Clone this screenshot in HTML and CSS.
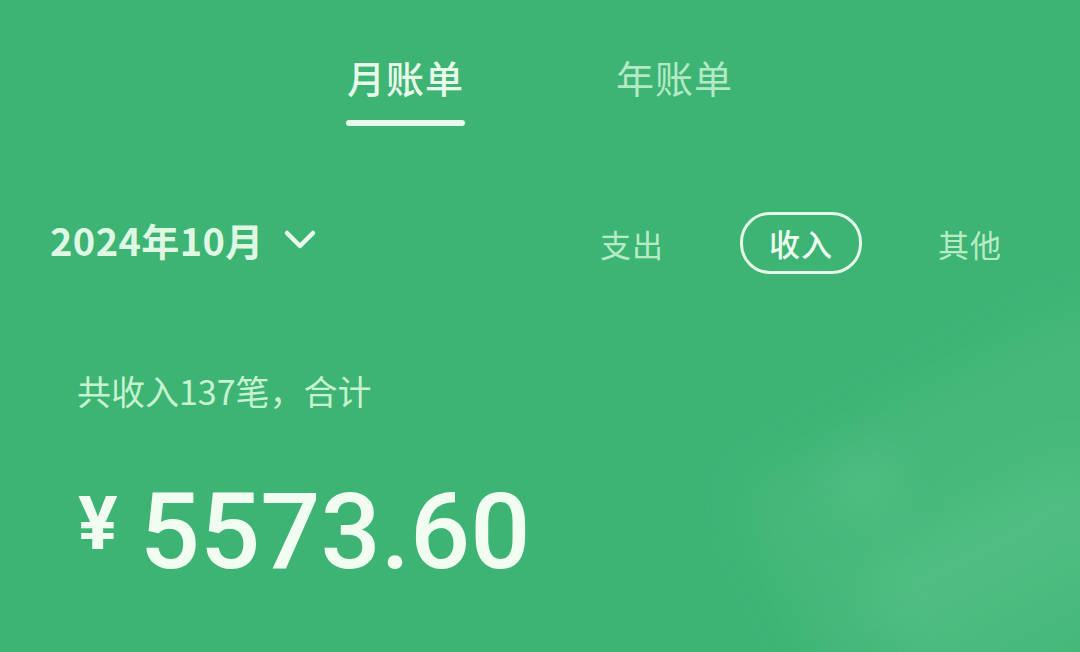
FILE: index.html
```html
<!DOCTYPE html>
<html lang="zh-CN">
<head>
<meta charset="utf-8">
<link rel="stylesheet" href="styles.css">
</head>
<body>
<div class="screen">
  <div class="blob blob-a"></div>
  <div class="blob blob-b"></div>
  <div class="blob blob-c"></div>
  <nav class="tabs">
    <div class="tab active">月账单<span class="bar"></span></div>
    <div class="tab">年账单</div>
  </nav>
  <div class="filter-row">
    <div class="month">2024年10月
      <svg class="chev" width="34" height="24" viewBox="0 0 34 24"><path d="M4 5 L17 18 L30 5" fill="none" stroke="currentColor" stroke-width="4.5" stroke-linecap="round" stroke-linejoin="round"/></svg>
    </div>
    <div class="types">
      <span class="type">支出</span>
      <span class="type selected">收入</span>
      <span class="type">其他</span>
    </div>
  </div>
  <div class="summary">共收入137笔，合计</div>
  <div class="amount"><span class="yen">¥</span><span class="num">5573.60</span></div>
</div>
</body>
</html>
```
FILE: styles.css
```css
html, body {
  margin: 0;
  padding: 0;
}
body {
  width: 1080px;
  height: 652px;
  overflow: hidden;
  font-family: "Noto Sans CJK SC", "Noto Sans", sans-serif;
}
.screen {
  position: relative;
  width: 1080px;
  height: 652px;
  background: #3db474;
  overflow: hidden;
  display: flex;
  flex-direction: column;
}
.blob {
  position: absolute;
  filter: blur(24px);
  pointer-events: none;
}
.blob-a {
  left: 760px; top: 380px; width: 420px; height: 220px;
  border-radius: 40px;
  background: rgba(110, 205, 150, 0.18);
  transform: rotate(-28deg);
}
.blob-b {
  left: 880px; top: 500px; width: 260px; height: 180px;
  border-radius: 40px;
  background: rgba(120, 210, 160, 0.2);
  transform: rotate(-28deg);
}
.blob-c {
  left: 830px; top: 450px; width: 70px; height: 70px;
  border-radius: 50%;
  background: rgba(130, 215, 165, 0.18);
}
.tabs {
  position: relative;
  display: flex;
  justify-content: center;
  gap: 152px;
  padding-top: 55px;
}
.tab {
  position: relative;
  font-size: 38px;
  line-height: 44px;
  color: #b3e9c6;
  letter-spacing: 1px;
  height: 71px;
}
.tab.active {
  color: #e8fbeb;
  font-weight: 500;
}
.tab .bar {
  position: absolute;
  left: -1px;
  right: -1px;
  bottom: 0;
  height: 6px;
  border-radius: 3px;
  background: #e8fbeb;
}
.filter-row {
  position: relative;
  display: flex;
  align-items: center;
  justify-content: space-between;
  margin-top: 87px;
  padding: 0 78px 0 50px;
  height: 60px;
}
.month {
  display: flex;
  align-items: center;
  gap: 19px;
  font-size: 38px;
  font-weight: 700;
  color: #dff8e4;
  letter-spacing: 0.4px;
  margin-top: -8px;
}
.chev {
  color: #e8fbeb;
  margin-top: 2px;
}
.types {
  display: flex;
  align-items: center;
  gap: 76px;
}
.type {
  font-size: 31px;
  color: #b6ebc6;
  letter-spacing: 1px;
}
.type.selected {
  color: #eefcf0;
  font-weight: 500;
  border: 3px solid #e3f8e7;
  border-radius: 30px;
  padding: 6px 26px;
  line-height: 44px;
}
.summary {
  position: relative;
  margin-top: 96px;
  padding-left: 77px;
  font-size: 34px;
  color: #c6f2d1;
  line-height: 44px;
}
.amount {
  position: relative;
  display: flex;
  align-items: flex-start;
  padding-left: 78px;
  margin-top: 70px;
  color: #f2fdf2;
  font-family: "Roboto", "DejaVu Sans", sans-serif;
}
.yen {
  font-size: 74px;
  font-weight: 700;
  line-height: 80px;
  margin-top: 1px;
  margin-right: 22px;
}
.num {
  font-size: 106px;
  font-weight: 500;
  line-height: 100px;
  margin-top: -1px;
}
```
